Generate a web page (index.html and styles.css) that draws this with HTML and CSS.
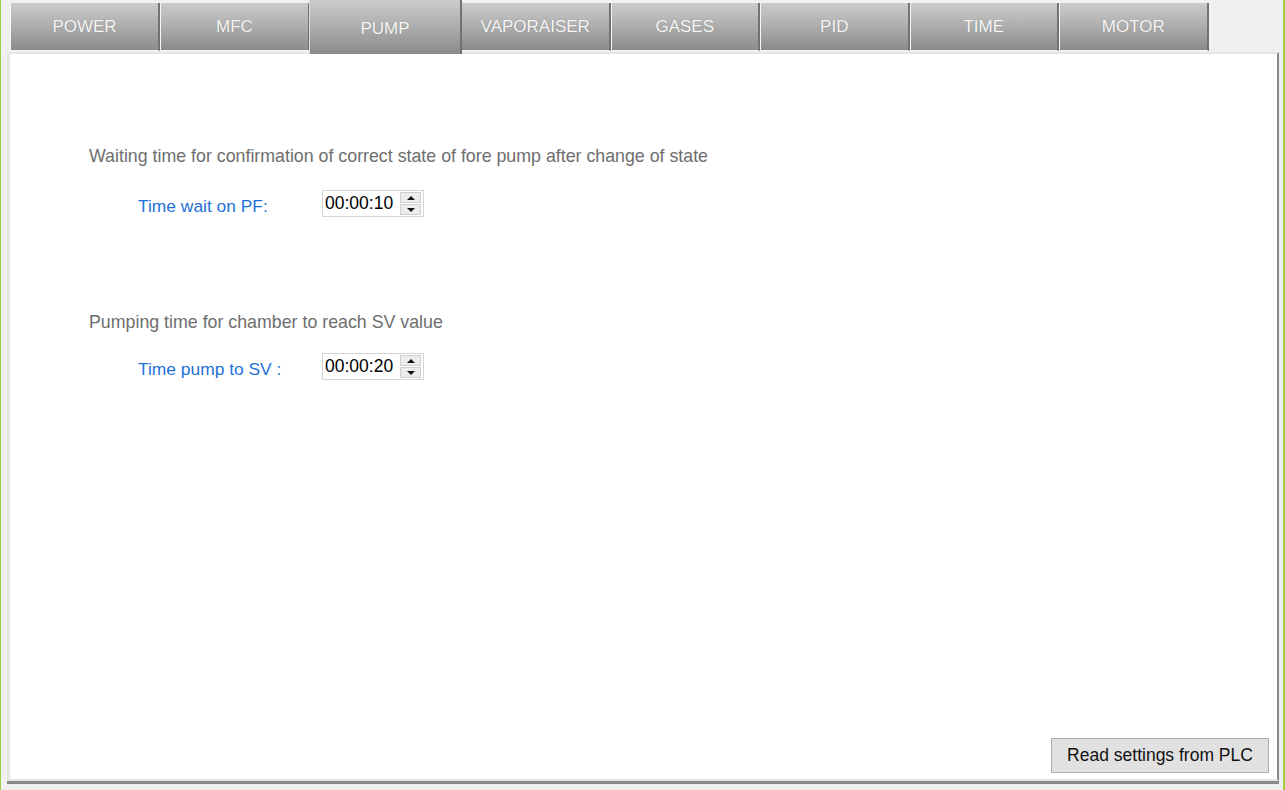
FILE: index.html
```html
<!DOCTYPE html>
<html>
<head>
<meta charset="utf-8">
<link rel="stylesheet" href="styles.css">
</head>
<body>
<div class="window">
  <div class="tabs">
    <div class="tab">POWER</div>
    <div class="tab">MFC</div>
    <div class="tab tab-active">PUMP</div>
    <div class="tab">VAPORAISER</div>
    <div class="tab">GASES</div>
    <div class="tab">PID</div>
    <div class="tab">TIME</div>
    <div class="tab">MOTOR</div>
  </div>
  <div class="panel">
    <div class="content">
      <section class="group group-first">
        <p class="desc">Waiting time for confirmation of correct state of fore pump after change of state</p>
        <div class="row">
          <span class="label">Time wait on PF:</span>
          <div class="spin">
            <span class="value">00:00:10</span>
            <div class="spin-btns">
              <div class="spin-btn"><span class="tri-up"></span></div>
              <div class="spin-btn"><span class="tri-down"></span></div>
            </div>
          </div>
        </div>
      </section>
      <section class="group group-second">
        <p class="desc">Pumping time for chamber to reach SV value</p>
        <div class="row">
          <span class="label">Time pump to SV :</span>
          <div class="spin">
            <span class="value">00:00:20</span>
            <div class="spin-btns">
              <div class="spin-btn"><span class="tri-up"></span></div>
              <div class="spin-btn"><span class="tri-down"></span></div>
            </div>
          </div>
        </div>
      </section>
    </div>
    <div class="footer">
      <button class="btn">Read settings from PLC</button>
    </div>
  </div>
</div>
</body>
</html>
```

FILE: styles.css
```css
html, body {
  margin: 0;
  padding: 0;
}
body {
  width: 1285px;
  height: 790px;
  background: #f0f0f0;
  font-family: "Liberation Sans", Arial, sans-serif;
  overflow: hidden;
}
.window {
  box-sizing: border-box;
  width: 1285px;
  height: 790px;
  border-left: 1px solid #9fd03c;
  border-right: 2px solid #9fd03c;
  display: flex;
  flex-direction: column;
}
.tabs {
  display: flex;
  align-items: flex-end;
  height: 52px;
  padding-left: 9px;
}
.tab {
  box-sizing: border-box;
  width: 150px;
  height: 48px;
  margin-bottom: 1px;
  border-left: 1px solid #f7f7f7;
  border-right: 2px solid #727272;
  border-bottom: 1px solid #f4f4f4;
  background: linear-gradient(to bottom, #cbcbcb 0%, #adadad 50%, #8a8a8a 100%);
  color: #f6f6f6;
  font-size: 17px;
  text-shadow: 0 0 1px rgba(90, 90, 90, 0.5);
  display: flex;
  align-items: center;
  justify-content: center;
}
.tab:last-child {
  width: 149px;
}
.tab-active {
  width: 153px;
  height: 54px;
  margin-left: -1px;
  margin-bottom: -2px;
  border-left: 1px solid #dcdcdc;
  border-bottom: none;
  position: relative;
  z-index: 1;
  padding-top: 3px;
}
.tab-active + .tab {
  margin-left: -1px;
}
.tab-active ~ .tab {
  width: 149.5px;
}
.panel {
  box-sizing: border-box;
  margin-left: 6px;
  width: 1272px;
  height: 729px;
  background: #ffffff;
  border-top: 2px solid #e6e6e6;
  border-left: 3px solid #e6e6e6;
  border-right: 2px solid #8a8a8a;
  border-bottom: 2px solid #e6e6e6;
  box-shadow: 0 3px 0 0 #8a8a8a;
  display: flex;
  flex-direction: column;
}
.content {
  flex: 1;
  padding-left: 79px;
}
.desc {
  margin: 0;
  font-size: 17.8px;
  color: #6e6e6e;
  line-height: 20px;
}
.group-first {
  padding-top: 92px;
}
.group-second {
  padding-top: 95px;
}
.row {
  display: flex;
  align-items: center;
  padding-left: 49px;
}
.group-first .row {
  margin-top: 24px;
}
.group-second .row {
  margin-top: 21px;
}
.label {
  width: 184px;
  font-size: 17.4px;
  color: #1f72d8;
  line-height: 20px;
  padding-top: 4px;
}
.spin {
  box-sizing: border-box;
  width: 102px;
  height: 27px;
  border: 1px solid #d4d4d4;
  display: flex;
  align-items: center;
  padding-left: 2px;
  padding-right: 2px;
}
.value {
  flex: 1;
  font-size: 17.5px;
  color: #000;
}
.spin-btns {
  display: flex;
  flex-direction: column;
  gap: 1px;
}
.spin-btn {
  box-sizing: border-box;
  width: 21px;
  height: 11px;
  background: #ececec;
  border: 1px solid #cfcfcf;
  display: flex;
  align-items: center;
  justify-content: center;
}
.tri-up {
  width: 0;
  height: 0;
  border-left: 4px solid transparent;
  border-right: 4px solid transparent;
  border-bottom: 4px solid #111;
}
.tri-down {
  width: 0;
  height: 0;
  border-left: 4px solid transparent;
  border-right: 4px solid transparent;
  border-top: 4px solid #111;
}
.footer {
  display: flex;
  justify-content: flex-end;
  padding-right: 8px;
  padding-bottom: 6px;
}
.btn {
  box-sizing: border-box;
  width: 218px;
  height: 35px;
  background: #e1e1e1;
  border: 1px solid #adadad;
  font-family: "Liberation Sans", Arial, sans-serif;
  font-size: 17.5px;
  color: #111;
  padding: 0;
}
```
